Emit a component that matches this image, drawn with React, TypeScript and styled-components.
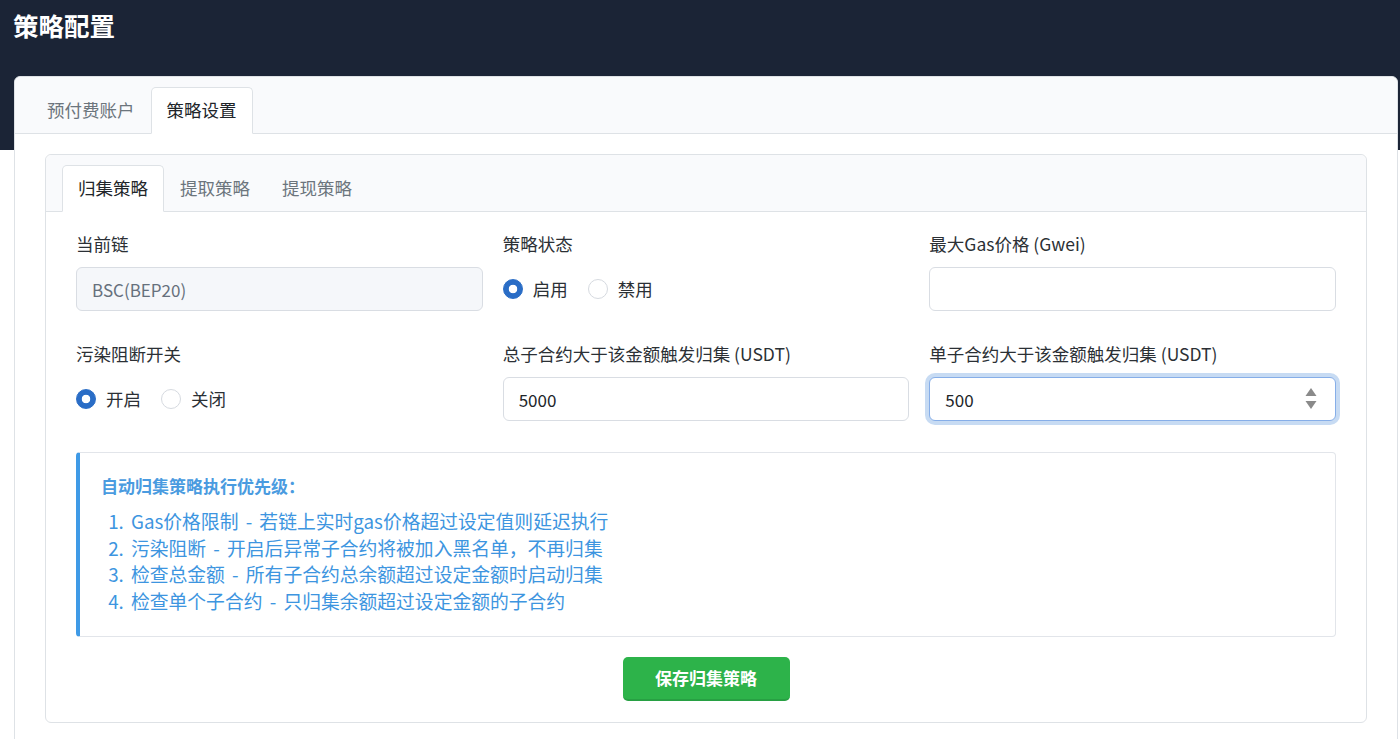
import React, { useState } from 'react';
import styled, { createGlobalStyle, css } from 'styled-components';

const GlobalStyle = createGlobalStyle`
  body {
    margin: 0;
    font-family: "Noto Sans CJK SC", "Noto Sans", sans-serif;
    color: #2b3035;
    background: #fff;
  }
  * {
    box-sizing: border-box;
  }
`;

const Page = styled.div`
  min-height: 100vh;
  background: linear-gradient(#1b2436 0, #1b2436 150px, #fff 150px);
  padding: 0 2px 0 14px;
`;

const Title = styled.h1`
  margin: 0 0 0 -1px;
  padding-top: 6px;
  height: 76px;
  font-size: 25.5px;
  line-height: 38px;
  font-weight: 700;
  color: #fff;
`;

const Card = styled.section<{ $nested?: boolean }>`
  background: #fff;
  border: 1px solid #dee2e6;
  border-radius: ${(props) => (props.$nested ? '6px' : '6px 6px 0 0')};
`;

const TabBar = styled.nav`
  display: flex;
  align-items: flex-end;
  padding: 10px 16px 0;
  background: #f9fafc;
  border-bottom: 1px solid #dee2e6;
  border-radius: 6px 6px 0 0;
`;

const Tab = styled.button<{ $active: boolean }>`
  height: 47px;
  padding: 0 15px 2px;
  margin-bottom: -1px;
  font-family: inherit;
  font-size: 17.5px;
  line-height: 44px;
  color: #6c757d;
  background: transparent;
  border: 1px solid transparent;
  border-radius: 5px 5px 0 0;
  cursor: pointer;
  ${(props) =>
    props.$active &&
    css`
      color: #212529;
      background: #fff;
      border-color: #dee2e6 #dee2e6 #fff;
    `};
`;

const CardBody = styled.div<{ $inner?: boolean }>`
  padding: ${(props) => (props.$inner ? '19px 30px 21px' : '20px 30px')};
`;

const FormGrid = styled.div`
  display: grid;
  grid-template-columns: repeat(3, 1fr);
  gap: 30px 20px;
`;

const Field = styled.div`
  display: flex;
  flex-direction: column;
`;

const Label = styled.label`
  font-size: 17.5px;
  line-height: 26px;
  margin-bottom: 10px;
  color: #2b3035;
`;

const InputWrap = styled.div`
  position: relative;
`;

const Input = styled.input<{ $focused?: boolean }>`
  width: 100%;
  height: 44px;
  padding: 0 15px;
  font-family: inherit;
  font-size: 17px;
  color: #212529;
  background: #fff;
  border: 1px solid #d9dde3;
  border-radius: 6px;
  outline: none;
  &:disabled {
    background: #f5f7fa;
    color: #66707c;
  }
  ${(props) =>
    props.$focused &&
    css`
      border-color: #86aee8;
      box-shadow: 0 0 0 4px #c7dbf3;
    `};
`;

const Spinner = styled.svg`
  position: absolute;
  right: 19px;
  top: 10px;
`;

const RadioGroup = styled.div`
  display: flex;
  align-items: center;
  gap: 20px;
  height: 44px;
`;

const RadioOption = styled.label`
  display: flex;
  align-items: center;
  gap: 10px;
  font-size: 17.5px;
  line-height: 26px;
  color: #2b3035;
  cursor: pointer;
`;

const RadioDot = styled.span<{ $checked: boolean }>`
  width: 20px;
  height: 20px;
  border-radius: 50%;
  border: 1px solid #d6dae0;
  background: #fff;
  ${(props) =>
    props.$checked &&
    css`
      border-color: #2a6dc6;
      background: radial-gradient(circle, #fff 0 4px, #2a6dc6 4.6px);
    `};
`;

const InfoBox = styled.div`
  margin-top: 31px;
  padding: 20px 24px 21px 21px;
  border: 1px solid #e2e5ea;
  border-left: 4px solid #3f9ae6;
  border-radius: 4px;
  color: #3d95e0;
`;

const InfoTitle = styled.div`
  font-size: 17px;
  font-weight: 700;
  line-height: 26px;
  margin-bottom: 9px;
  color: #4a9be0;
`;

const InfoList = styled.ol`
  margin: 0;
  padding-left: 30px;
  font-size: 18.8px;
  line-height: 26.7px;
  word-spacing: 3px;
`;

const Actions = styled.div`
  display: flex;
  justify-content: center;
  margin-top: 20px;
`;

const SaveButton = styled.button`
  width: 167px;
  height: 44px;
  font-family: inherit;
  font-size: 17px;
  font-weight: 700;
  color: #fff;
  background: #2db34a;
  border: none;
  border-bottom: 2px solid #27a043;
  border-radius: 5px;
  cursor: pointer;
`;

const outerTabs = ['预付费账户', '策略设置'];
const innerTabs = ['归集策略', '提取策略', '提现策略'];
const priorities = [
  'Gas价格限制 - 若链上实时gas价格超过设定值则延迟执行',
  '污染阻断 - 开启后异常子合约将被加入黑名单，不再归集',
  '检查总金额 - 所有子合约总余额超过设定金额时启动归集',
  '检查单个子合约 - 只归集余额超过设定金额的子合约',
];

const App: React.FC = () => {
  const [outerTab, setOuterTab] = useState(1);
  const [innerTab, setInnerTab] = useState(0);
  const [enabled, setEnabled] = useState(true);
  const [blocking, setBlocking] = useState(true);
  const [maxGas, setMaxGas] = useState('');
  const [total, setTotal] = useState('5000');
  const [single, setSingle] = useState('500');

  return (
    <Page>
      <GlobalStyle />
      <Title>策略配置</Title>
      <Card>
        <TabBar>
          {outerTabs.map((t, i) => (
            <Tab key={t} $active={outerTab === i} onClick={() => setOuterTab(i)}>
              {t}
            </Tab>
          ))}
        </TabBar>
        <CardBody>
          <Card $nested>
            <TabBar>
              {innerTabs.map((t, i) => (
                <Tab key={t} $active={innerTab === i} onClick={() => setInnerTab(i)}>
                  {t}
                </Tab>
              ))}
            </TabBar>
            <CardBody $inner>
              <FormGrid>
                <Field>
                  <Label>当前链</Label>
                  <Input type="text" value="BSC(BEP20)" disabled readOnly />
                </Field>
                <Field>
                  <Label>策略状态</Label>
                  <RadioGroup>
                    <RadioOption onClick={() => setEnabled(true)}>
                      <RadioDot $checked={enabled} />
                      启用
                    </RadioOption>
                    <RadioOption onClick={() => setEnabled(false)}>
                      <RadioDot $checked={!enabled} />
                      禁用
                    </RadioOption>
                  </RadioGroup>
                </Field>
                <Field>
                  <Label>最大Gas价格 (Gwei)</Label>
                  <Input type="text" value={maxGas} onChange={(e) => setMaxGas(e.target.value)} />
                </Field>
                <Field>
                  <Label>污染阻断开关</Label>
                  <RadioGroup>
                    <RadioOption onClick={() => setBlocking(true)}>
                      <RadioDot $checked={blocking} />
                      开启
                    </RadioOption>
                    <RadioOption onClick={() => setBlocking(false)}>
                      <RadioDot $checked={!blocking} />
                      关闭
                    </RadioOption>
                  </RadioGroup>
                </Field>
                <Field>
                  <Label>总子合约大于该金额触发归集 (USDT)</Label>
                  <Input type="text" value={total} onChange={(e) => setTotal(e.target.value)} />
                </Field>
                <Field>
                  <Label>单子合约大于该金额触发归集 (USDT)</Label>
                  <InputWrap>
                    <Input $focused type="text" value={single} onChange={(e) => setSingle(e.target.value)} />
                    <Spinner width="12" height="24" viewBox="0 0 12 24">
                      <path d="M6 1 L11.5 9 L0.5 9 Z" fill="#8a8a8a" />
                      <path d="M0.5 14 L11.5 14 L6 22 Z" fill="#8a8a8a" />
                    </Spinner>
                  </InputWrap>
                </Field>
              </FormGrid>
              <InfoBox>
                <InfoTitle>自动归集策略执行优先级：</InfoTitle>
                <InfoList>
                  {priorities.map((p) => (
                    <li key={p}>{p}</li>
                  ))}
                </InfoList>
              </InfoBox>
              <Actions>
                <SaveButton type="button">保存归集策略</SaveButton>
              </Actions>
            </CardBody>
          </Card>
        </CardBody>
      </Card>
    </Page>
  );
};

export default App;
